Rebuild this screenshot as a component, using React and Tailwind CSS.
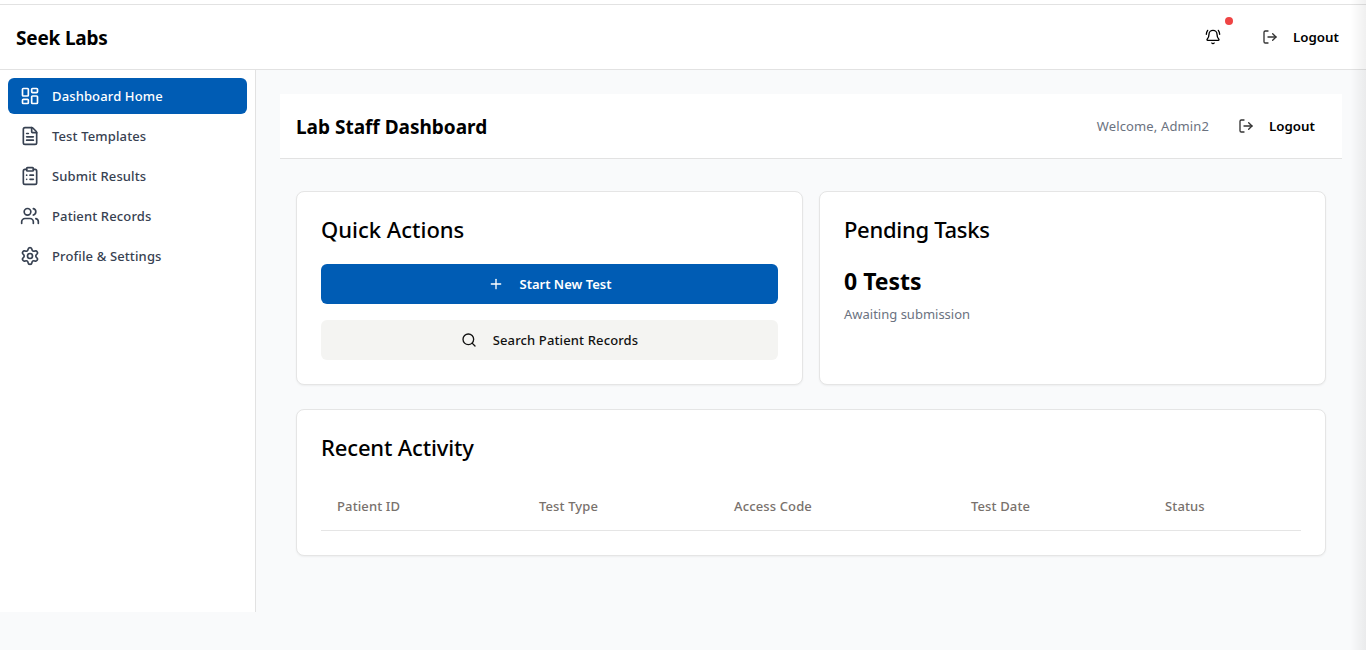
import React from "react";
import {
  BellRing,
  FileText,
  LayoutDashboard,
  LogOut,
  Plus,
  Search,
  Settings,
  Users,
  ClipboardList,
} from "lucide-react";

const navItems = [
  { label: "Dashboard Home", icon: LayoutDashboard, active: true },
  { label: "Test Templates", icon: FileText },
  { label: "Submit Results", icon: ClipboardList },
  { label: "Patient Records", icon: Users },
  { label: "Profile & Settings", icon: Settings },
];

const columns = [
  { label: "Patient ID", width: "w-[202px]" },
  { label: "Test Type", width: "w-[195px]" },
  { label: "Access Code", width: "w-[237px]" },
  { label: "Test Date", width: "w-[194px]" },
  { label: "Status", width: "flex-1" },
];

function LogoutButton() {
  return (
    <button className="flex items-center gap-[15px] text-[13.3px] font-semibold text-black">
      <LogOut size={16} className="text-[#333]" />
      <span className="w-[45px] pt-[2px] whitespace-nowrap">Logout</span>
    </button>
  );
}

export default function App() {
  return (
    <div className="relative h-[650px] overflow-hidden bg-[#f9fafb] font-['Noto_Sans','Open_Sans',sans-serif]">
      <div className="h-[4px] bg-white"></div>
      <header className="flex h-[66px] items-center justify-between border-y border-[#e2e2e2] bg-white pl-4 pr-7">
        <div className="pt-[2px] text-[19px] font-bold tracking-[-0.2px] text-black">Seek Labs</div>
        <div className="flex items-center gap-[41px]">
          <div className="relative">
            <BellRing size={16} className="text-black" />
            <span className="absolute -top-[12px] left-[20px] h-2 w-2 rounded-full bg-[#ef4444]"></span>
          </div>
          <LogoutButton />
        </div>
      </header>

      <div className="flex">
        <aside className="h-[542px] w-[256px] shrink-0 border-r border-[#e2e2e2] bg-white px-2 pt-2">
          <nav className="flex flex-col gap-1">
            {navItems.map((item) => {
              const Icon = item.icon;
              return (
                <a
                  key={item.label}
                  className={
                    item.active
                      ? "flex h-9 items-center gap-3 rounded-md bg-[#005cb4] pl-3 text-[13px] font-medium tracking-[0.01em] text-white"
                      : "flex h-9 items-center gap-3 rounded-md pl-3 text-[13px] font-medium tracking-[0.01em] text-[#374151]"
                  }
                >
                  <Icon size={20} />
                  <span className="pt-[2px]">{item.label}</span>
                </a>
              );
            })}
          </nav>
        </aside>

        <main className="flex-1 px-6 pt-6">
          <div className="flex h-[65px] items-center justify-between border-b border-[#e2e2e2] bg-white pl-4 pr-7">
            <h1 className="pt-[2px] text-[19px] font-bold text-black">Lab Staff Dashboard</h1>
            <div className="flex items-center gap-[29px]">
              <span className="pt-[2px] text-[13px] tracking-[0.01em] text-[#6b7280]">Welcome, Admin2</span>
              <LogoutButton />
            </div>
          </div>

          <div className="px-4 pt-8">
            <div className="grid grid-cols-2 gap-4">
              <section className="h-[194px] rounded-lg border border-[#e5e5e5] bg-white px-6 pt-[20px] shadow-xs">
                <h2 className="text-[22px] leading-[34px] font-medium text-black">Quick Actions</h2>
                <button className="mt-[18px] flex h-10 w-full items-center justify-center gap-[16px] rounded-md bg-[#005cb4] text-[13px] font-semibold text-white">
                  <Plus size={16} />
                  <span className="pt-[2px]">Start New Test</span>
                </button>
                <button className="mt-4 flex h-10 w-full items-center justify-center gap-[16px] rounded-md bg-[#f4f4f2] text-[13px] font-medium tracking-[0.01em] text-[#111]">
                  <Search size={16} />
                  <span className="pt-[2px]">Search Patient Records</span>
                </button>
              </section>

              <section className="h-[194px] rounded-lg border border-[#e5e5e5] bg-white px-6 pt-[20px] shadow-xs">
                <h2 className="text-[22px] leading-[34px] font-medium tracking-[-0.3px] text-black">Pending Tasks</h2>
                <div className="mt-[18px] text-[23px] leading-[34px] font-bold text-black">0 Tests</div>
                <p className="mt-[7px] text-[13px] text-[#6b7280]">Awaiting submission</p>
              </section>
            </div>

            <section className="mt-6 h-[147px] rounded-lg border border-[#e5e5e5] bg-white px-6 pt-[20px] shadow-xs">
              <h2 className="text-[22px] leading-[34px] font-medium tracking-[-0.15px] text-black">Recent Activity</h2>
              <div className="mt-[21px] flex h-[46px] items-center border-b border-[#e5e5e5] px-4 pb-[2px]">
                {columns.map((col) => (
                  <div key={col.label} className={`${col.width} text-[13px] font-medium tracking-[0.01em] text-[#78716c]`}>
                    {col.label}
                  </div>
                ))}
              </div>
            </section>
          </div>
        </main>
      </div>

      {/* soft shadow along the right window edge */}
      <div className="pointer-events-none absolute inset-y-0 right-0 w-4 bg-gradient-to-r from-transparent to-black/[0.06]"></div>
    </div>
  );
}
